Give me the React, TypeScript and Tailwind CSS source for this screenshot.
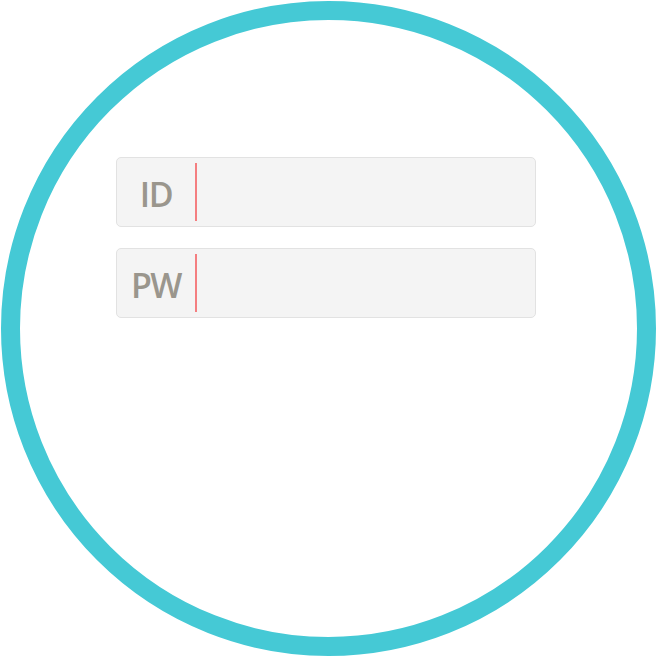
const fields = ['ID', 'PW']

export default function App() {
  return (
    <div className="w-[658px] h-[658px] bg-white p-px">
      {/* Ring */}
      <div
        className="w-[655px] h-[655px] rounded-full border-[19px] border-[#45c9d5] pt-[137px] pl-[96px]"
        style={{ fontFamily: '"Open Sans", "Noto Sans", sans-serif' }}
      >
        <div className="flex flex-col gap-[21px] w-[420px]">
          {fields.map((label) => (
            <div
              key={label}
              className="flex h-[70px] items-stretch rounded-[5px] border border-[#e2e2e2] bg-[#f4f4f4] py-[5px]"
            >
              <span className="flex w-[78px] items-center justify-center pt-[3px] text-[34px] font-semibold leading-none tracking-[-1.5px] text-[#9a968d]">
                {label}
              </span>
              <span className="w-[2px] bg-[#f47e80]" />
            </div>
          ))}
        </div>
      </div>
    </div>
  )
}
